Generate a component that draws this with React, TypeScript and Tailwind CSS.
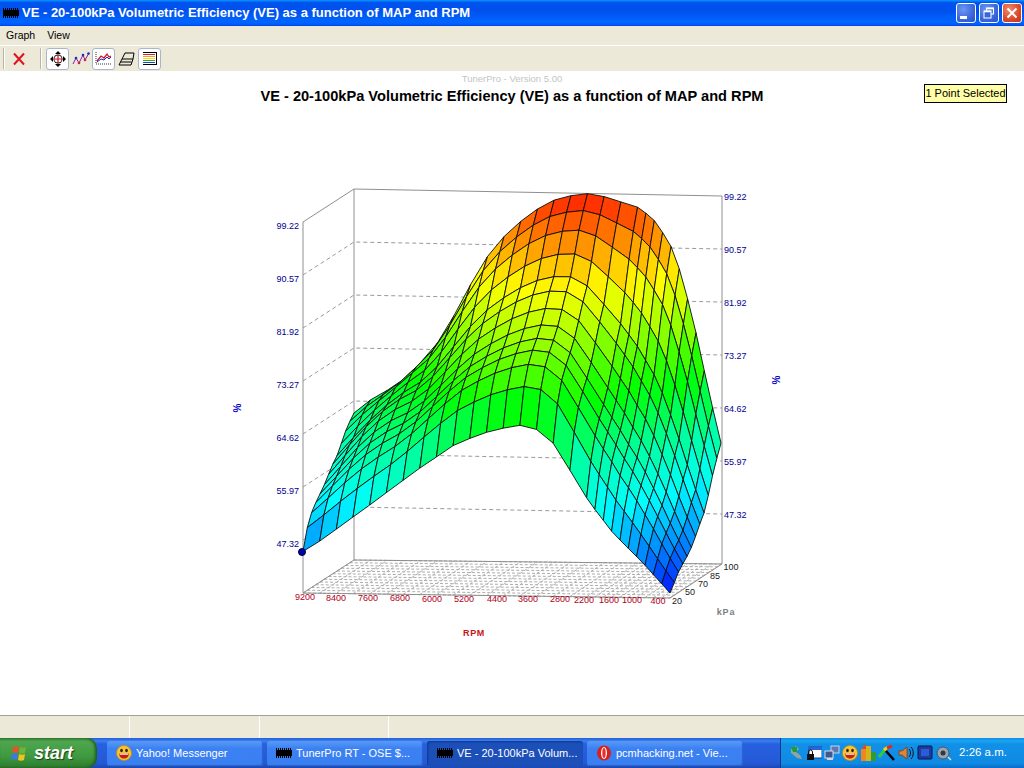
import { type ReactNode } from 'react';

// silhouette of the surface, read off the picture in page pixels
const frontEdge = [
  [302, 552], [317, 543], [367, 507], [417, 470], [457, 443], [493, 430], [527, 424], [543, 433],
  [557, 447], [577, 483], [590, 503], [613, 533], [643, 563], [670, 593],
];
const backEdge = [
  [354, 413], [365, 403], [400, 383], [433, 350], [450, 323], [480, 267], [497, 243], [530, 213],
  [560, 197], [593, 193], [640, 208], [657, 223], [673, 250], [683, 280], [697, 337], [710, 397], [721, 443],
];
const rowBlend = [0, 0.183, 0.282, 0.34, 0.386, 0.44, 0.51, 0.584, 0.644, 0.743, 0.847, 0.93, 1];

const rpms = [
  9200, 8800, 8400, 8000, 7600, 7200, 6800, 6400, 6000, 5600, 5200, 4800, 4400, 4000, 3600, 3200, 2800, 2400,
  2200, 2000, 1800, 1600, 1400, 1200, 1000, 800, 600, 400,
];
const rowCount = rowBlend.length;

const lerpEdge = (edge: number[][], x: number) => {
  if (x <= edge[0][0]) return edge[0][1];
  for (let i = 1; i < edge.length; i++) {
    if (x <= edge[i][0]) {
      const t = (x - edge[i - 1][0]) / (edge[i][0] - edge[i - 1][0]);
      return edge[i - 1][1] + (edge[i][1] - edge[i - 1][1]) * t;
    }
  }
  return edge[edge.length - 1][1];
};

const floorPoint = (u: number, v: number): [number, number] => {
  const yFront = 593 + 5 * u;
  const yBack = 560 + 4 * u;
  return [303 + 367 * u + 51 * v, yFront + (yBack - yFront) * v];
};

const heightAt = (u: number, rowIndex: number) => {
  const v = rowIndex / (rowCount - 1);
  const front = floorPoint(u, 0);
  const back = floorPoint(u, 1);
  const hFront = front[1] - lerpEdge(frontEdge, front[0]);
  const hBack = back[1] - lerpEdge(backEdge, back[0]);
  const g = Math.pow(rowBlend[rowIndex], 1 + 0.6 * Math.max(0, (u - 0.66) / 0.34));
  const bump = 26 * Math.sin(Math.PI * v) * Math.exp(-Math.pow((u - 0.14) / 0.12, 2));
  return hFront + (hBack - hFront) * g + bump;
};

const colorStops: [number, number[]][] = [
  [0, [0, 0, 255]],
  [38, [0, 120, 255]],
  [90, [0, 255, 255]],
  [140, [0, 255, 150]],
  [190, [0, 255, 0]],
  [250, [170, 255, 0]],
  [285, [255, 255, 0]],
  [320, [255, 160, 0]],
  [371, [255, 20, 0]],
];

const heightColor = (z: number) => {
  for (let i = 1; i < colorStops.length; i++) {
    if (z <= colorStops[i][0]) {
      const [z0, c0] = colorStops[i - 1];
      const [z1, c1] = colorStops[i];
      const t = Math.max(0, (z - z0) / (z1 - z0));
      return `rgb(${c0.map((c, k) => Math.round(c + (c1[k] - c) * t)).join(',')})`;
    }
  }
  return 'rgb(255,20,0)';
};

const columnU = rpms.map((rpm) => (9200 - rpm) / 8800);

const surfacePoint = (colIndex: number, rowIndex: number): [number, number, number] => {
  const u = columnU[colIndex];
  const v = rowIndex / (rowCount - 1);
  const [x, y] = floorPoint(u, v);
  const z = heightAt(u, rowIndex);
  return [x, y - z, z];
};

const cells: { key: string; points: string; fill: string }[] = [];
for (let r = rowCount - 2; r >= 0; r--) {
  for (let c = 0; c < columnU.length - 1; c++) {
    const corners = [surfacePoint(c, r), surfacePoint(c + 1, r), surfacePoint(c + 1, r + 1), surfacePoint(c, r + 1)];
    cells.push({
      key: `${c}-${r}`,
      points: corners.map((p) => `${p[0].toFixed(1)},${p[1].toFixed(1)}`).join(' '),
      fill: heightColor((corners[0][2] + corners[1][2] + corners[2][2] + corners[3][2]) / 4),
    });
  }
}

const gridLevels = [0, 1, 2, 3, 4, 5, 6];
const valueLabels = ['99.22', '90.57', '81.92', '73.27', '64.62', '55.97', '47.32'];

const rpmLabels: [string, number, number][] = [
  ['9200', 305, 600], ['8400', 336, 601], ['7600', 368, 601], ['6800', 400, 601], ['6000', 432, 602], ['5200', 464, 602],
  ['4400', 497, 602], ['3600', 528, 602], ['2800', 560, 602], ['2200', 584, 603], ['1600', 609, 603], ['1000', 632, 603],
  ['400', 658, 604],
];
const kpaLabels: [string, number, number][] = [
  ['20', 677, 604], ['50', 690, 595], ['70', 703, 587], ['85', 715, 579], ['100', 731, 570],
];

function Chart() {
  return (
    <svg viewBox="0 106 1024 609" className="h-[609px] w-[1024px] shrink-0" style={{ fontFamily: '"Liberation Sans", Arial, sans-serif' }}>
      <g stroke="#adadad" strokeWidth="1" strokeDasharray="3 2" fill="none">
        {rowBlend.map((_, r) => {
          const a = floorPoint(0, r / (rowCount - 1));
          const b = floorPoint(1, r / (rowCount - 1));
          return <line key={r} x1={a[0]} y1={a[1]} x2={b[0]} y2={b[1]} />;
        })}
        {columnU.map((u) => {
          const a = floorPoint(u, 0);
          const b = floorPoint(u, 1);
          return <line key={u} x1={a[0]} y1={a[1]} x2={b[0]} y2={b[1]} />;
        })}
      </g>
      <g stroke="#9a9a9a" strokeWidth="1" fill="none" strokeDasharray="4 3">
        {gridLevels.slice(1).map((i) => (
          <polyline key={i} points={`303,${222 + i * 53} 354,${189 + i * 53} 722,${196 + i * 53}`} />
        ))}
      </g>
      <g stroke="#8f8f8f" strokeWidth="1" fill="none">
        <polyline points="303,593 303,222 354,189 722,196 722,564" />
        <polyline points="303,593 354,560 722,564" />
        <line x1="354" y1="189" x2="354" y2="560" />
        <line x1="303" y1="593" x2="670" y2="598" />
        <line x1="670" y1="598" x2="722" y2="564" />
      </g>
      {cells.map((cell) => (
        <polygon key={cell.key} points={cell.points} fill={cell.fill} stroke="#0c0c0c" strokeWidth="0.9" strokeLinejoin="round" />
      ))}
      <circle cx="302" cy="552" r="3.5" fill="#0000b0" stroke="#000030" strokeWidth="1" />
      <g fill="#00008f" fontSize="9">
        {gridLevels.map((i) => (
          <text key={i} x="299" y={229 + i * 53} textAnchor="end">{valueLabels[i]}</text>
        ))}
        {gridLevels.map((i) => (
          <text key={i} x="724" y={200 + i * 53}>{valueLabels[i]}</text>
        ))}
      </g>
      <g fill="#0000c8" fontSize="10" fontWeight="700">
        <text transform="translate(241,408) rotate(-90)" textAnchor="middle">%</text>
        <text transform="translate(780,380) rotate(-90)" textAnchor="middle">%</text>
      </g>
      <g fill="#b00020" fontSize="9" textAnchor="middle">
        {rpmLabels.map(([label, x, y]) => (
          <text key={label} x={x} y={y}>{label}</text>
        ))}
      </g>
      <g fill="#202020" fontSize="9" textAnchor="middle">
        {kpaLabels.map(([label, x, y]) => (
          <text key={label} x={x} y={y}>{label}</text>
        ))}
      </g>
      <text x="474" y="636" fill="#c81414" fontSize="9" fontWeight="700" textAnchor="middle" letterSpacing="0.6">RPM</text>
      <text x="726" y="615" fill="#808080" fontSize="9" fontWeight="700" textAnchor="middle" letterSpacing="0.8">kPa</text>
    </svg>
  );
}

function ChipIcon() {
  return (
    <svg width="16" height="12" viewBox="0 0 16 12" className="shrink-0">
      <rect x="0" y="3" width="16" height="6" fill="#000" />
      <path d="M0 2h16M0 10h16" stroke="#000" strokeDasharray="1 1" strokeWidth="2" fill="none" />
    </svg>
  );
}

function SmileIcon({ size = 16 }: { size?: number }) {
  return (
    <svg width={size} height={size} viewBox="0 0 16 16" className="shrink-0">
      <circle cx="8" cy="8" r="7.5" fill="#f7c531" stroke="#c98a12" strokeWidth="0.8" />
      <ellipse cx="5.5" cy="5.5" rx="1.3" ry="1.8" fill="#30200a" />
      <ellipse cx="10.5" cy="5.5" rx="1.3" ry="1.8" fill="#30200a" />
      <path d="M3 8.5h10c0 3-2.2 5-5 5s-5-2-5-5z" fill="#c42014" />
      <path d="M3.6 8.5h8.8v1.2H3.6z" fill="#fff" />
    </svg>
  );
}

function TaskButton({ active, icon, label }: { active?: boolean; icon: ReactNode; label: string }) {
  return (
    <div
      className={
        active
          ? 'flex h-[25px] w-[156px] items-center gap-[3px] rounded-[3px] bg-[#1c4fb8] pl-[10px] text-[11px] text-white shadow-[inset_1px_1px_2px_#0f3a8e]'
          : 'flex h-[25px] w-[156px] items-center gap-[3px] rounded-[3px] bg-[linear-gradient(to_bottom,#5a9af5,#3c81f3_30%,#3a7ff0)] pl-[9px] text-[11px] text-white shadow-[inset_-1px_-1px_1px_#2a62c9]'
      }
    >
      {icon}
      <span className="ml-px truncate">{label}</span>
    </div>
  );
}

function ToolButton({ checked, children }: { checked?: boolean; children: ReactNode }) {
  return (
    <div
      className={
        checked
          ? 'flex h-[22px] w-[23px] items-center justify-center rounded-[3px] border border-[#a9b7c9] bg-white'
          : 'flex h-[22px] w-[23px] items-center justify-center'
      }
    >
      {children}
    </div>
  );
}

function WindowButton({ close, children }: { close?: boolean; children: ReactNode }) {
  return (
    <div
      className={
        close
          ? 'flex h-[20px] w-[20px] items-center justify-center rounded-[3px] border border-white bg-[radial-gradient(circle_at_35%_30%,#ef8c6c,#d9482a_60%,#c23314)]'
          : 'flex h-[20px] w-[20px] items-center justify-center rounded-[3px] border border-white bg-[radial-gradient(circle_at_35%_30%,#6d97f2,#3a66dc_60%,#2a50c8)]'
      }
    >
      {children}
    </div>
  );
}

function Etch() {
  return <div className="h-[21px] w-[2px] border-l border-r border-l-[#b8b5a6] border-r-white" />;
}

function TrayIcons() {
  return (
    <div className="flex items-center gap-[2px]">
      <svg width="16" height="16" viewBox="0 0 16 16">
        <path d="M3 4l5-3 3 3-3 3 4 3 2 4-5-1-6-5z" fill="#8fa49a" />
        <path d="M3 2h6v5H5z" fill="#1e9c3c" />
      </svg>
      <svg width="16" height="16" viewBox="0 0 16 16">
        <rect x="3" y="2" width="13" height="11" fill="#fff" stroke="#1c3f9c" />
        <rect x="3" y="2" width="13" height="3" fill="#2a62d8" />
        <rect x="1" y="9" width="7" height="6" fill="#111" />
        <path d="M2.5 9V7a2 2 0 014 0v2" stroke="#111" fill="none" />
      </svg>
      <svg width="16" height="16" viewBox="0 0 16 16">
        <rect x="7" y="1" width="8" height="7" fill="#5f78b0" stroke="#c8d4ea" />
        <rect x="1" y="6" width="8" height="7" fill="#41588f" stroke="#d8e0ee" />
        <rect x="3" y="13" width="6" height="2" fill="#d2d6dc" />
      </svg>
      <SmileIcon size={16} />
      <svg width="16" height="16" viewBox="0 0 16 16">
        <rect x="1" y="4" width="5" height="12" fill="#f2861e" />
        <rect x="6" y="1" width="5" height="15" fill="#d2b41c" />
        <rect x="11" y="7" width="5" height="9" fill="#2e9b3a" />
        <rect x="3" y="0" width="3" height="4" fill="#e64a19" />
      </svg>
      <svg width="18" height="16" viewBox="0 0 18 16">
        <path d="M1 12L8 3" stroke="#2ecb3e" strokeWidth="3" />
        <path d="M6 5l4-3" stroke="#f2d21e" strokeWidth="3" />
        <path d="M9 3l5-2" stroke="#e2281e" strokeWidth="3" />
        <path d="M8 6l8 9" stroke="#000" strokeWidth="2.5" />
      </svg>
      <svg width="16" height="16" viewBox="0 0 16 16">
        <path d="M1 6h3l5-4v12l-5-4H1z" fill="#e8832a" stroke="#7a3208" strokeWidth="0.7" />
        <path d="M11 4c2 2 2 6 0 8M13 2c3 3 3 9 0 12" stroke="#111" fill="none" />
      </svg>
      <svg width="18" height="16" viewBox="0 0 18 16">
        <rect x="2" y="1" width="14" height="13" rx="1" fill="#1c3c9c" stroke="#0a1850" />
        <rect x="5" y="4" width="8" height="7" fill="#2e5cd8" />
      </svg>
      <svg width="16" height="16" viewBox="0 0 16 16">
        <circle cx="7" cy="8" r="6" fill="#9aa4b0" stroke="#4c5560" />
        <circle cx="7" cy="8" r="2.5" fill="#303844" />
        <path d="M12 12l3 3" stroke="#dde3ea" strokeWidth="1.5" />
      </svg>
    </div>
  );
}

export default function App() {
  return (
    <div
      className="flex h-[768px] w-[1024px] flex-col overflow-hidden bg-white"
      style={{ fontFamily: '"Liberation Sans", Arial, sans-serif' }}
    >
      {/* title bar */}
      <div className="flex h-[26px] shrink-0 items-center bg-[linear-gradient(to_bottom,#0997ff_0%,#0053ee_10%,#0050ee_40%,#0066ff_85%,#005bff_94%,#003dd7_100%)] pl-[3px] pr-[2px]">
        <ChipIcon />
        <span className="ml-[3px] text-[13px] font-bold text-white">
          VE - 20-100kPa Volumetric Efficiency (VE) as a function of MAP and RPM
        </span>
        <div className="ml-auto flex items-center gap-[3px]">
          <WindowButton>
            <div className="mr-[5px] mt-[9px] h-[3px] w-[7px] bg-white" />
          </WindowButton>
          <WindowButton>
            <svg width="12" height="12" viewBox="0 0 12 12" fill="none" stroke="#fff">
              <rect x="3.5" y="1" width="7" height="6" strokeWidth="1" />
              <rect x="1" y="4" width="7" height="7" strokeWidth="1" fill="#3a66dc" />
              <path d="M1 4.5h7M3.5 1.5h7" strokeWidth="1.4" />
            </svg>
          </WindowButton>
          <WindowButton close>
            <svg width="12" height="12" viewBox="0 0 12 12" stroke="#fff" strokeWidth="2">
              <path d="M1.5 1.5l9 9M10.5 1.5l-9 9" />
            </svg>
          </WindowButton>
        </div>
      </div>

      {/* menu bar */}
      <div className="flex h-[19px] shrink-0 items-center gap-[12px] bg-[#ece9d8] pl-[6px] text-[10.5px] text-black">
        <span>Graph</span>
        <span>View</span>
      </div>

      {/* toolbar */}
      <div className="flex h-[26px] shrink-0 items-center border-t border-white bg-[#ece9d8] pl-[3px]">
        <Etch />
        <div className="ml-[6px] flex w-[16px] items-center justify-center">
          <svg width="14" height="14" viewBox="0 0 14 14" stroke="#e0141e" strokeWidth="2">
            <path d="M2 1.5l10 11M12 1.5l-10 11" />
          </svg>
        </div>
        <div className="ml-[13px]">
          <Etch />
        </div>
        <div className="ml-[4px] flex items-center gap-0">
          <ToolButton checked>
            <svg width="18" height="18" viewBox="0 0 18 18">
              <path d="M9 1l3 3H6zM9 17l3-3H6zM1 9l3-3v6zM17 9l-3-3v6z" fill="#000" />
              <rect x="4.5" y="4.5" width="9" height="9" rx="4.5" fill="#111" />
              <circle cx="9" cy="9" r="3.6" fill="#fff" />
              <path d="M9 4.5v9M4.5 9h9" stroke="#d01020" strokeWidth="1.2" />
            </svg>
          </ToolButton>
          <ToolButton>
            <svg width="18" height="16" viewBox="0 0 18 16" fill="none">
              <path d="M1 13l3-6 3 5 4-8 2 5 4-7" stroke="#8a1fa8" />
              <circle cx="4" cy="7" r="1.3" fill="#1c2fb0" />
              <circle cx="7" cy="12" r="1.3" fill="#d02040" />
              <circle cx="11" cy="4" r="1.3" fill="#1c2fb0" />
              <circle cx="13" cy="9" r="1.3" fill="#d02040" />
              <circle cx="16.5" cy="2.5" r="1.3" fill="#1c2fb0" />
            </svg>
          </ToolButton>
          <ToolButton checked>
            <svg width="17" height="15" viewBox="0 0 17 15" fill="none">
              <path d="M1 1v12h15" stroke="#333" strokeDasharray="1 1" />
              <path d="M2 10l4-5 3 2 3-4 2 3 2-1" stroke="#d01828" strokeWidth="1.3" />
              <path d="M2 11l4-3 3 1 3-3 2 2 2-2" stroke="#1830b0" />
            </svg>
          </ToolButton>
          <ToolButton>
            <svg width="17" height="14" viewBox="0 0 17 14" fill="none" stroke="#000">
              <path d="M1 13l3-6h11l-2 6z" />
              <path d="M4 7l3-6h9l-1 6" />
              <path d="M2.5 10h11" />
            </svg>
          </ToolButton>
          <ToolButton checked>
            <svg width="16" height="14" viewBox="0 0 16 14" fill="none">
              <path d="M1 2.5h12" stroke="#e02020" />
              <path d="M1 4.5h12" stroke="#f0a010" />
              <path d="M1 6.5h12" stroke="#e8e020" />
              <path d="M1 8.5h12" stroke="#20b030" />
              <path d="M1 10.5h12" stroke="#2040d0" />
              <path d="M1 0.5h14M1 12.5h14M14.5 0v13" stroke="#000" />
            </svg>
          </ToolButton>
        </div>
      </div>

      {/* graph area */}
      <div className="relative flex flex-1 flex-col items-center overflow-hidden bg-white">
        <div className="mt-[1px] h-[14px] text-[9.5px] leading-[14px] text-[#c4c4c4]">TunerPro - Version 5.00</div>
        <div className="h-[20px] text-[14.6px] font-bold leading-[20px] text-black">
          VE - 20-100kPa Volumetric Efficiency (VE) as a function of MAP and RPM
        </div>
        <Chart />
        <div className="absolute left-[924px] top-[13px] flex h-[19px] w-[83px] items-center justify-center border border-black bg-[#ffffa8] text-[11px] text-black">
          1 Point Selected
        </div>
      </div>

      {/* status bar */}
      <div className="flex h-[23px] shrink-0 border-t border-t-[#a5a294] bg-[#ece9d8]">
        <div className="w-[130px] border-r border-r-white" />
        <div className="w-[130px] border-r border-r-white" />
        <div className="w-[129px] border-r border-r-white" />
        <div className="flex-1" />
      </div>

      {/* taskbar */}
      <div className="flex h-[30px] shrink-0 items-center bg-[linear-gradient(to_bottom,#1f5fd8,#3a7ff0_10%,#2760e0_20%,#2459d6_85%,#1c47b0)]">
        <div className="flex h-[30px] w-[97px] shrink-0 items-center gap-[5px] rounded-r-[10px] bg-[linear-gradient(to_bottom,#3c8a3c,#4ea64e_12%,#3f9a3f_60%,#2d7a2d)] pl-[11px] shadow-[inset_-2px_0_3px_#1e5a1e]">
          <svg width="18" height="18" viewBox="0 0 18 18">
            <path d="M2 3c2-1 4-1 6 0l-1 6c-2-1-4-1-6 0z" fill="#e4532a" />
            <path d="M9 3c2 1 4 1 6 0l-1 6c-2 1-4 1-6 0z" fill="#6cb43c" />
            <path d="M1 10c2-1 4-1 6 0l-1 6c-2-1-4-1-6 0z" fill="#3a7be0" />
            <path d="M8 10c2 1 4 1 6 0l-1 6c-2 1-4 1-6 0z" fill="#f2c21e" />
          </svg>
          <span className="text-[18px] font-bold italic text-white [text-shadow:1px_1px_1px_#1a3f1a]">start</span>
        </div>
        <div className="ml-[10px] flex items-center gap-[4px]">
          <TaskButton icon={<SmileIcon size={16} />} label="Yahoo! Messenger" />
          <TaskButton icon={<ChipIcon />} label="TunerPro RT - OSE $..." />
          <TaskButton active icon={<ChipIcon />} label="VE - 20-100kPa Volum..." />
          <TaskButton
            icon={
              <svg width="16" height="16" viewBox="0 0 16 16" className="shrink-0">
                <ellipse cx="8" cy="8" rx="7" ry="7.5" fill="#d8201c" />
                <ellipse cx="8" cy="8" rx="3" ry="6" fill="#fff" />
                <ellipse cx="8" cy="8" rx="1.7" ry="5" fill="#e8302a" />
              </svg>
            }
            label="pcmhacking.net - Vie..."
          />
        </div>
        <div className="ml-auto flex h-[30px] w-[244px] items-center border-l border-l-[#10398e] bg-[linear-gradient(to_bottom,#0f8ae8,#18a6f0_10%,#1290e8_20%,#0f8ae2_85%,#0a6ac8)] pl-[7px]">
          <TrayIcons />
          <span className="ml-auto mr-[17px] text-[11.5px] text-white">2:26 a.m.</span>
        </div>
      </div>
    </div>
  );
}
